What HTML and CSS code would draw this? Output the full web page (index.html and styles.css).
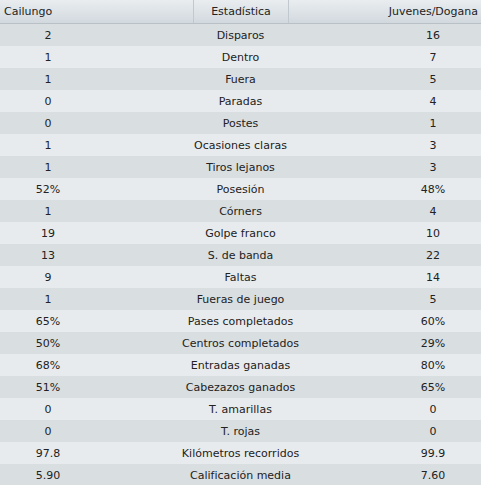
FILE: index.html
```html
<!DOCTYPE html>
<html lang="es">
<head>
<meta charset="utf-8">
<link rel="stylesheet" href="styles.css">
</head>
<body>
<div class="table">
  <div class="head">
    <div class="h h-left">Cailungo</div>
    <div class="h h-mid">Estadística</div>
    <div class="h h-right">Juvenes/Dogana</div>
  </div>
  <div class="row"><span>2</span><span>Disparos</span><span>16</span></div>
  <div class="row"><span>1</span><span>Dentro</span><span>7</span></div>
  <div class="row"><span>1</span><span>Fuera</span><span>5</span></div>
  <div class="row"><span>0</span><span>Paradas</span><span>4</span></div>
  <div class="row"><span>0</span><span>Postes</span><span>1</span></div>
  <div class="row"><span>1</span><span>Ocasiones claras</span><span>3</span></div>
  <div class="row"><span>1</span><span>Tiros lejanos</span><span>3</span></div>
  <div class="row"><span>52%</span><span>Posesión</span><span>48%</span></div>
  <div class="row"><span>1</span><span>Córners</span><span>4</span></div>
  <div class="row"><span>19</span><span>Golpe franco</span><span>10</span></div>
  <div class="row"><span>13</span><span>S. de banda</span><span>22</span></div>
  <div class="row"><span>9</span><span>Faltas</span><span>14</span></div>
  <div class="row"><span>1</span><span>Fueras de juego</span><span>5</span></div>
  <div class="row"><span>65%</span><span>Pases completados</span><span>60%</span></div>
  <div class="row"><span>50%</span><span>Centros completados</span><span>29%</span></div>
  <div class="row"><span>68%</span><span>Entradas ganadas</span><span>80%</span></div>
  <div class="row"><span>51%</span><span>Cabezazos ganados</span><span>65%</span></div>
  <div class="row"><span>0</span><span>T. amarillas</span><span>0</span></div>
  <div class="row"><span>0</span><span>T. rojas</span><span>0</span></div>
  <div class="row"><span>97.8</span><span>Kilómetros recorridos</span><span>99.9</span></div>
  <div class="row"><span>5.90</span><span>Calificación media</span><span>7.60</span></div>
</div>
</body>
</html>
```
FILE: styles.css
```css
html, body {
  margin: 0;
  padding: 0;
  background: #e8ebed;
}
body {
  font-family: "DejaVu Sans", sans-serif;
  font-size: 11px;
  color: #222;
}
.table {
  width: 481px;
  display: flex;
  flex-direction: column;
}
.head {
  display: grid;
  grid-template-columns: 193px 96px 1fr;
  height: 24px;
  background: linear-gradient(#e9edf0, #d2d9de);
  border-bottom: 1px solid #b9c1c7;
  box-sizing: border-box;
}
.h {
  display: flex;
  align-items: center;
  padding: 0 4px;
}
.h-mid {
  justify-content: center;
  border-left: 1px solid #c2c9ce;
  border-right: 1px solid #c2c9ce;
}
.h-right {
  justify-content: flex-end;
  padding-right: 3px;
}
.row {
  display: grid;
  grid-template-columns: 96px 1fr 96px;
  height: 22px;
  align-items: center;
  text-align: center;
}
.row:nth-child(even) {
  background: #d9dee1;
}
.row:nth-child(odd) {
  background: #e8ebed;
}
```
